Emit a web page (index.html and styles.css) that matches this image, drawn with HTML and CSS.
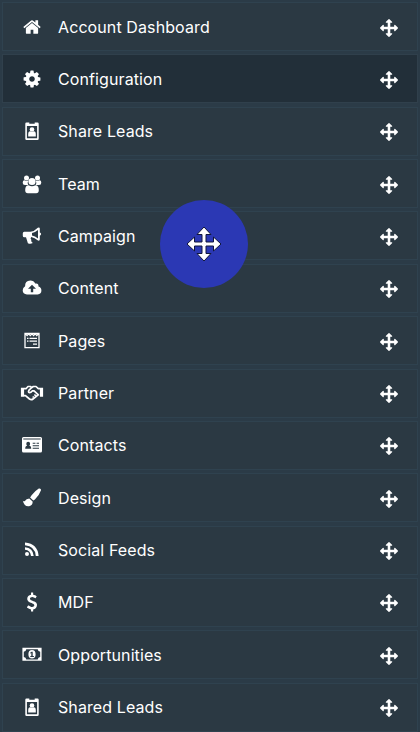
FILE: index.html
```html
<!DOCTYPE html>
<html lang="en">
<head>
<meta charset="utf-8">
<title>Menu order</title>
<link rel="stylesheet" href="styles.css">
</head>
<body>
<svg class="defs" width="0" height="0">
<symbol id="move" viewBox="0 0 1792 1792"><path d="M1792 896q0 26-19 45l-256 256q-19 19-45 19t-45-19-19-45v-128h-384v384h128q26 0 45 19t19 45-19 45l-256 256q-19 19-45 19t-45-19l-256-256q-19-19-19-45t19-45 45-19h128v-384h-384v128q0 26-19 45t-45 19-45-19l-256-256q-19-19-19-45t19-45l256-256q19-19 45-19t45 19 19 45v128h384v-384h-128q-26 0-45-19t-19-45 19-45l256-256q19-19 45-19t45 19l256 256q19 19 19 45t-19 45-45 19h-128v384h384v-128q0-26 19-45t45-19 45 19l256 256q19 19 19 45z"/></symbol>
<symbol id="badge" viewBox="0 0 24 24"><path fill-rule="evenodd" d="M6.500 3.500h2.800v1.200h5.400V3.500h2.800q1.200 0 1.200 1.200v15.100q0 1.200-1.200 1.200h-11q-1.200 0-1.200-1.200V4.700q0-1.200 1.200-1.200zm.4 3.600v12.200h10.200V7.100z"/><circle cx="12" cy="10.500" r="2.300"/><path d="M8.200 17.500v-2.200q0-3 2-3 1.800 1 3.600 0 2 0 2 3v2.200z"/></symbol>
</svg>
<main class="menu">
<div class="item"><svg class="icon" viewBox="-233 -233 2258 2258"><path d="M1472 992v480q0 26-19 45t-45 19h-384v-384h-256v384h-384q-26 0-45-19t-19-45v-480q0-1 .5-3t.5-3l575-474 575 474q1 2 1 6zm223-69l-62 74q-8 9-21 11h-3q-13 0-21-7l-692-577-692 577q-12 8-24 7-13-2-21-11l-62-74q-8-10-7-23.500t11-21.500l719-599q32-26 76-26t76 26l244 204v-195q0-14 9-23t23-9h192q14 0 23 9t9 23v408l219 182q10 8 11 21.500t-7 23.500z"/></svg><span class="label">Account Dashboard</span><svg class="move"><use href="#move"/></svg></div>
<div class="item active"><svg class="icon" viewBox="-200 -200 2192 2192"><path d="M1152 896q0-106-75-181t-181-75-181 75-75 181 75 181 181 75 181-75 75-181zm512-109v222q0 12-8 23t-20 13l-185 28q-19 54-39 91 35 50 107 138 10 12 10 25t-9 23q-27 37-99 108t-94 71q-12 0-26-9l-138-108q-44 23-91 38-16 136-29 186-7 28-36 28h-222q-14 0-24.500-8.500t-11.500-21.500l-28-184q-49-16-90-37l-141 107q-10 9-25 9-14 0-25-11-126-114-165-168-7-10-7-23 0-12 8-23 15-21 51-66.500t54-70.500q-27-50-41-99l-183-27q-13-2-21-12.500t-8-23.500v-222q0-12 8-23t19-13l186-28q14-46 39-92-40-57-107-138-10-12-10-24 0-10 9-23 26-36 98.500-107.500t94.500-71.500q13 0 26 10l138 107q44-23 91-38 16-136 29-186 7-28 36-28h222q14 0 24.500 8.500t11.500 21.500l28 184q49 16 90 37l142-107q9-9 24-9 13 0 25 10 129 119 165 170 7 8 7 22 0 12-8 23-15 21-51 66.500t-54 70.500q26 50 41 98l183 28q13 2 21 12.500t8 23.500z"/></svg><span class="label">Configuration</span><svg class="move"><use href="#move"/></svg></div>
<div class="item"><svg class="icon"><use href="#badge"/></svg><span class="label">Share Leads</span><svg class="move"><use href="#move"/></svg></div>
<div class="item"><svg class="icon" viewBox="0 0 24 24"><circle cx="6.500" cy="5.900" r="2.500"/><circle cx="17.500" cy="5.900" r="2.500"/><path d="M4.300 8.200q2 1.300 4 .3Q7 11 8.300 13H5q-2.300 0-2.300-2.200 0-2.800 1.600-2.600zM19.700 8.200q-2 1.300-4 .3 1.300 2.500 0 4.500H19q2.300 0 2.300-2.200 0-2.800-1.600-2.600z"/><circle cx="12" cy="9.500" r="3.600"/><path d="M8.500 13.200q3.500 2.300 7 0 3.300 0 3.300 5.100 0 2.900-2.700 2.900H7.900q-2.700 0-2.700-2.900 0-5.100 3.300-5.100z"/></svg><span class="label">Team</span><svg class="move"><use href="#move"/></svg></div>
<div class="item"><svg class="icon" viewBox="0 .8 24 24"><path fill-rule="evenodd" d="M4.300 8.500h6.200q4-.5 7.300-4 2-.7 2 .9v3.900q1.300.4 1.300 1.600t-1.300 1.600v3.900q0 1.600-1.800 1-3.300-3-6.800-3.600-1.300 1.500.2 2.900-.8 1 .4 2.100l1 .9q-2.300 1.500-4.900.3L6 14H4.300q-1.500 0-1.500-1.500V10q0-1.500 1.500-1.500zm7.700 1.200v2.700q3 .7 6 2.900V6.700q-3 2.500-6 3z"/></svg><span class="label">Campaign</span><svg class="move"><use href="#move"/></svg></div>
<div class="item"><svg class="icon" viewBox="0 0 24 24"><path fill-rule="evenodd" d="M7 18.400q-4.300-.2-4.300-4.200 0-2.600 2.400-3.900-.2-5.800 5.200-5.900 3.600 0 4.900 3.200 3.500-.7 3.300 3 2.900 1 2.900 3.900 0 3.700-3.800 3.900zM12 8.700l-4 4.100h2.800v3.400h2.400v-3.400H16z"/></svg><span class="label">Content</span><svg class="move"><use href="#move"/></svg></div>
<div class="item"><svg class="icon line" viewBox="0 .4 24 24"><path d="M5 4.700h14v14.300H5zM5.500 5.200l1.600 1.800 1.600-1.800 1.600 1.800 1.700-1.800 1.600 1.800 1.600-1.800 1.600 1.800 1.600-1.800"/><path d="M7 9.700h1.500M9.500 9.700H17M7 12.500h1.500M9.500 12.500H17M13 15.500h4"/></svg><span class="label">Pages</span><svg class="move"><use href="#move"/></svg></div>
<div class="item"><svg class="icon" viewBox="0 0 24 24"><path d="M.9 6.800h3.200v9H.9zm19 0h3.200v9h-3.200z"/><g class="hand"><path d="M4 7.700h2L8 5.500h2.300l1.500 1L13.300 5.500H16l2.300 2.200H20M4 14.700h1.500l4 3.300q1.800 1.300 3.500 0l5.800-4.600"/><path d="M11.800 6.500 9 9.200q-1.200 2 .5 2.400 1.500 0 2.700-1.700h1.900l4.200 4M12.700 15.500l1 1M14.400 13.500l1.500 1.500"/></g></svg><span class="label">Partner</span><svg class="move"><use href="#move"/></svg></div>
<div class="item"><svg class="icon" viewBox="0 0 24 24"><path fill-rule="evenodd" d="M3.500 4h17q1.500 0 1.500 1.500v12.400q0 1.500-1.500 1.500h-17Q2 19.400 2 17.900V5.500Q2 4 3.500 4zM3.300 5.400v1.100h17.400V5.400zM8.200 8.700q-1.900 0-1.900 2 0 1.300.9 2-2 .1-2 3h6q0-2.900-2-3 .9-.7.9-2 0-2-1.900-2zm4.500 1v1.100h2.700V9.700zm3.900 0v1.100h2.400V9.700zm-3.900 2.500v1.100H19v-1.100zm0 2.500v1.100H19v-1.100z"/></svg><span class="label">Contacts</span><svg class="move"><use href="#move"/></svg></div>
<div class="item"><svg class="icon" viewBox="0 .6 24 24"><path d="M18.800 3.200q2.500-.4 2.200 1.700-1.900 5.400-6.100 9.200l-1.600 1.100-3.200-3.100 1.500-2.200q3.200-4.200 7.200-6.700zM9.300 13l3.300 3.200q.5 3.500-3.500 4.700-4.700.7-6.300-5.500 1 .9 2.100.3Q6.200 13 9.300 13z"/></svg><span class="label">Design</span><svg class="move"><use href="#move"/></svg></div>
<div class="item"><svg class="icon" viewBox="0 0 24 24"><circle cx="7" cy="16" r="2"/><path d="M5 9.300q8 .6 8.700 8.700H11q-.6-5.600-6-6.200zM5 4.400Q17.800 5.600 18.600 18h-2.800Q15 8 5 7.200z"/></svg><span class="label">Social Feeds</span><svg class="move"><use href="#move"/></svg></div>
<div class="item"><svg class="icon" viewBox="-224 -224 2240 2240"><path d="M1362 1185q0 153-99.500 263.500t-258.500 136.500v175q0 14-9 23t-23 9h-135q-13 0-22.500-9.500t-9.500-22.500v-175q-66-9-127.500-31t-101.500-44.500-74-48-46.500-37.500-17.500-18q-17-21-2-41l103-135q7-10 23-12 15-2 24 9l2 2q113 99 243 125 37 8 74 8 81 0 142.500-43t61.500-122q0-28-15-53t-33.500-42-58.500-37.500-66-32-80-32.500q-39-16-61.500-25t-61.500-26.500-62.500-31-56.500-35.500-53.500-42.500-43.500-49-35.500-58-21-66.500-8.500-78q0-138 98-242t255-134v-180q0-13 9.500-22.500t22.500-9.500h135q14 0 23 9t9 23v176q57 6 110.500 23t87 33.500 63.500 37.500 39 29 15 14q17 18 5 38l-81 146q-8 15-23 16-14 3-27-7-3-3-14.500-12t-39-26.500-58.500-32-74.500-26-85.500-11.500q-95 0-155 43t-60 111q0 26 8.500 48t29.500 41.500 39.500 33 56 31 60.500 27 70 27.500q53 20 81 31.500t76 35 75.500 42.500 62 50 53 63.500 31.500 76.500 13 94z"/></svg><span class="label">MDF</span><svg class="move"><use href="#move"/></svg></div>
<div class="item"><svg class="icon" viewBox="0 0 24 24"><path fill-rule="evenodd" d="M2.400 4.800h19.200v13H2.400zM6.300 6.200Q6 8.500 3.800 8.700v5.200q2.200.2 2.500 2.500h11.400q.3-2.300 2.500-2.500V8.700q-2.200-.2-2.500-2.500z"/><path fill-rule="evenodd" d="M12 7q3.600 0 3.600 4.300T12 15.600t-3.600-4.300T12 7zm-.5 1.700L9.900 9.900l.6.700.8-.6v2.900h-1v1h3.600v-1h-1.200V8.700z"/></svg><span class="label">Opportunities</span><svg class="move"><use href="#move"/></svg></div>
<div class="item"><svg class="icon"><use href="#badge"/></svg><span class="label">Shared Leads</span><svg class="move"><use href="#move"/></svg></div>
</main>
<div class="pointer"><svg viewBox="0 0 36 36"><path d="M18 1l7 7.500h-5v7.500h7.500V11L35 18l-7.500 7v-5H20v7.500h5L18 35l-7-7.500h5V20H8.500v5L1 18l7.500-7v5H16V8.500h-5z"/></svg></div>
</body>
</html>
```
FILE: styles.css
```css
* { box-sizing: border-box; }
body {
  margin: 0;
  height: 732px;
  overflow: hidden;
  background: #2b3b47;
  font-family: Inter, "Liberation Sans", sans-serif;
}
.defs { position: absolute; }
.menu {
  display: grid;
  grid-auto-rows: 49px;
  row-gap: 3.370px;
  padding: 2px 2px 0;
}
.item {
  display: flex;
  align-items: center;
  padding: 0 19px 0 17px;
  border: 1px solid #2f424f;
  background: #2b3943;
  color: #fff;
}
.item.active { background: #222f39; border-color: #30404c; }
.icon {
  flex: none;
  width: 24px;
  height: 24px;
  fill: #fff;
}
.line { fill: none; stroke: #fff; stroke-width: 1.3; }
.hand { fill: none; stroke: #fff; stroke-width: 1.7; stroke-linejoin: round; }
.label {
  flex: 1;
  margin-left: 14px;
  font-size: 16px;
  line-height: 24px;
  letter-spacing: 0.1px;
  white-space: nowrap;
}
.move {
  flex: none;
  width: 18px;
  height: 18px;
  margin-top: 2px;
  fill: #fff;
}
.pointer {
  position: absolute;
  left: 160px;
  top: 200px;
  display: grid;
  place-items: center;
  width: 88px;
  height: 88px;
  border-radius: 50%;
  background: #2b38b4;
}
.pointer svg {
  width: 36px;
  height: 36px;
  fill: #fff;
  stroke: #10163c;
  stroke-width: 1;
}
```
